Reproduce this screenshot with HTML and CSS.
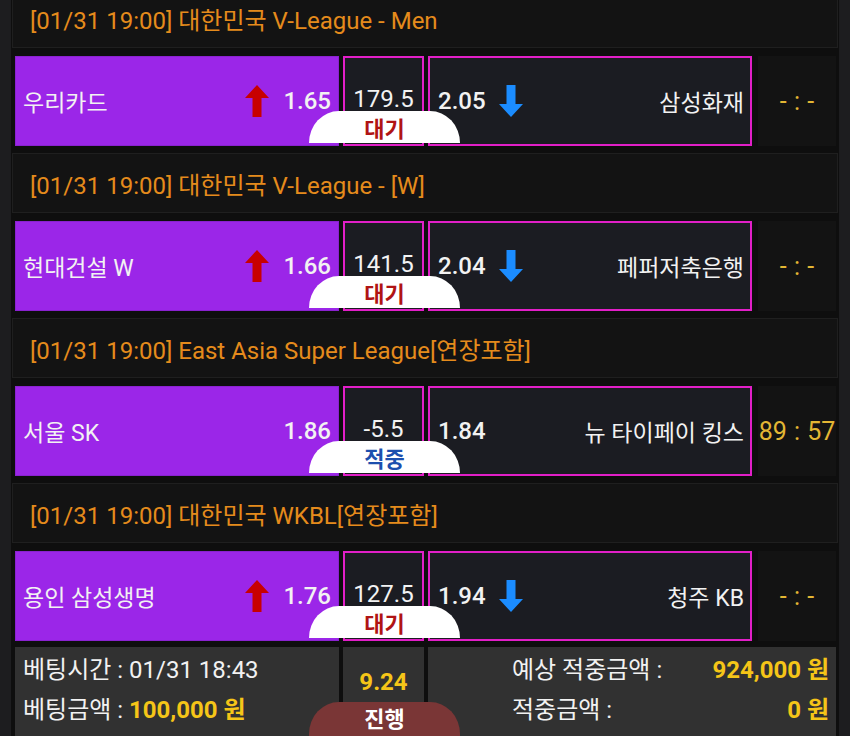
FILE: index.html
```html
<!DOCTYPE html>
<html lang="ko">
<head>
    <meta charset="UTF-8">
    <meta name="viewport" content="width=device-width, initial-scale=1.0">
    <title>베팅내역</title>
    <link rel="stylesheet" href="styles.css">
</head>
<body>

    <div class="board">
        <!-- Match 1 -->
        <div class="league first">[01/31 19:00] 대한민국 V-League - Men</div>
        <div class="bet-row">
            <div class="team home">
                <span class="name">우리카드</span>
                <svg class="arrow" viewBox="0 0 24 32"><polygon points="12,0 24,13 16.5,13 16.5,32 7.5,32 7.5,13 0,13" fill="#c80000"/></svg>
                <span class="odds">1.65</span>
            </div>
            <div class="line">179.5</div>
            <div class="team away">
                <span class="odds">2.05</span>
                <svg class="arrow" viewBox="0 0 24 32"><polygon points="12,32 24,19 16.5,19 16.5,0 7.5,0 7.5,19 0,19" fill="#1b8cff"/></svg>
                <span class="name">삼성화재</span>
            </div>
            <div class="score">- : -</div>
            <div class="status wait">대기</div>
        </div>

        <!-- Match 2 -->
        <div class="league">[01/31 19:00] 대한민국 V-League - [W]</div>
        <div class="bet-row">
            <div class="team home">
                <span class="name">현대건설 W</span>
                <svg class="arrow" viewBox="0 0 24 32"><polygon points="12,0 24,13 16.5,13 16.5,32 7.5,32 7.5,13 0,13" fill="#c80000"/></svg>
                <span class="odds">1.66</span>
            </div>
            <div class="line">141.5</div>
            <div class="team away">
                <span class="odds">2.04</span>
                <svg class="arrow" viewBox="0 0 24 32"><polygon points="12,32 24,19 16.5,19 16.5,0 7.5,0 7.5,19 0,19" fill="#1b8cff"/></svg>
                <span class="name">페퍼저축은행</span>
            </div>
            <div class="score">- : -</div>
            <div class="status wait">대기</div>
        </div>

        <!-- Match 3 -->
        <div class="league">[01/31 19:00] East Asia Super League[연장포함]</div>
        <div class="bet-row">
            <div class="team home">
                <span class="name">서울 SK</span>
                <span class="odds">1.86</span>
            </div>
            <div class="line">-5.5</div>
            <div class="team away">
                <span class="odds">1.84</span>
                <span class="name">뉴 타이페이 킹스</span>
            </div>
            <div class="score">89 : 57</div>
            <div class="status hit">적중</div>
        </div>

        <!-- Match 4 -->
        <div class="league">[01/31 19:00] 대한민국 WKBL[연장포함]</div>
        <div class="bet-row">
            <div class="team home">
                <span class="name">용인 삼성생명</span>
                <svg class="arrow" viewBox="0 0 24 32"><polygon points="12,0 24,13 16.5,13 16.5,32 7.5,32 7.5,13 0,13" fill="#c80000"/></svg>
                <span class="odds">1.76</span>
            </div>
            <div class="line">127.5</div>
            <div class="team away">
                <span class="odds">1.94</span>
                <svg class="arrow" viewBox="0 0 24 32"><polygon points="12,32 24,19 16.5,19 16.5,0 7.5,0 7.5,19 0,19" fill="#1b8cff"/></svg>
                <span class="name">청주 KB</span>
            </div>
            <div class="score">- : -</div>
            <div class="status wait">대기</div>
        </div>

        <!-- Summary -->
        <div class="summary">
            <div class="sum-cell info">
                <div>베팅시간 : 01/31 18:43</div>
                <div>베팅금액 : <span class="money">100,000 원</span></div>
            </div>
            <div class="sum-cell rate">9.24</div>
            <div class="sum-cell result">
                <div class="pair"><span>예상 적중금액 :</span><span class="money">924,000 원</span></div>
                <div class="pair"><span>적중금액 :</span><span class="money">0 원</span></div>
            </div>
            <div class="status progress">진행</div>
        </div>
    </div>

</body>
</html>
```

FILE: styles.css
```css
body {
    margin: 0;
    background-color: #1d1d1f;
    font-family: Roboto, "Noto Sans CJK KR", sans-serif;
    color: #f2f2f2;
    overflow: hidden;
}

.board {
    margin: 0 11px;
    padding: 0 3px 0 4px;
    background-color: #0e0e0e;
    height: 736px;
    display: flex;
    flex-direction: column;
}

.league {
    height: 58px;
    margin: 7px -2px 8px -3px;
    border: 1px solid #1f1f1f;
    background-color: #131313;
    color: #e58b1c;  /* orange league title */
    font-size: 24px;
    display: flex;
    align-items: center;
    padding-left: 17px;
    flex-shrink: 0;
}

.league.first {
    margin-top: -12px;
}

.bet-row {
    position: relative;
    height: 90px;
    display: flex;
    gap: 4px;
    flex-shrink: 0;
}

.team {
    width: 324px;
    box-sizing: border-box;
    display: flex;
    align-items: center;
    font-size: 23px;
}

.home {
    background-color: #9b26e8;  /* purple selected side */
    border: 1px solid #8a22d0;
    padding: 0 7px 0 7px;
}

.away {
    background-color: #1b1c22;
    border: 2px solid #e21fc8;  /* magenta outline */
    padding: 0 6px 0 8px;
}

.home .name {
    margin-right: auto;
}

.away .name {
    margin-left: auto;
}

.odds {
    font-size: 24px;
    font-weight: 500;
}

.arrow {
    width: 24px;
    height: 32px;
}

.home .arrow {
    margin-right: 14px;
}

.away .arrow {
    margin-left: 13px;
}

.line {
    width: 81px;
    box-sizing: border-box;
    background-color: #1b1c22;
    border: 2px solid #e21fc8;
    font-size: 24px;
    text-align: center;
    padding-top: 27px;
}

.score {
    width: 78px;
    margin-left: 2px;
    background-color: #131313;
    color: #e3b634;  /* yellow score */
    font-size: 25px;
    word-spacing: 1px;
    display: flex;
    align-items: center;
    justify-content: center;
}

.status {
    position: absolute;
    left: 294px;
    bottom: 3px;
    width: 151px;
    height: 32px;
    border-radius: 30px 30px 0 0 / 32px 32px 0 0;
    display: flex;
    align-items: center;
    justify-content: center;
    font-size: 22px;
    font-weight: 700;
}

.wait {
    background-color: #fff;
    color: #b01414;  /* dark red */
}

.hit {
    background-color: #fff;
    color: #1c4fae;  /* blue */
}

.summary {
    position: relative;
    margin-top: 6px;
    height: 89px;
    display: flex;
    gap: 4px;
    flex-shrink: 0;
}

.sum-cell {
    background-color: #313131;
    font-size: 24px;
}

.info {
    width: 324px;
    box-sizing: border-box;
    padding: 3px 0 0 8px;
    line-height: 40px;
}

.rate {
    width: 81px;
    color: #f5c518;
    font-weight: 700;
    text-align: center;
    padding-top: 21px;
    box-sizing: border-box;
}

.result {
    flex: 1;
    padding: 3px 7px 0 84px;
    line-height: 40px;
}

.pair {
    display: flex;
    justify-content: space-between;
}

.money {
    color: #f5c518;  /* yellow amounts */
    font-weight: 700;
}

.progress {
    bottom: -1px;
    height: 35px;
    padding-bottom: 6px;
    box-sizing: border-box;
    background-color: #7a3636;
    color: #fff;
}
```
